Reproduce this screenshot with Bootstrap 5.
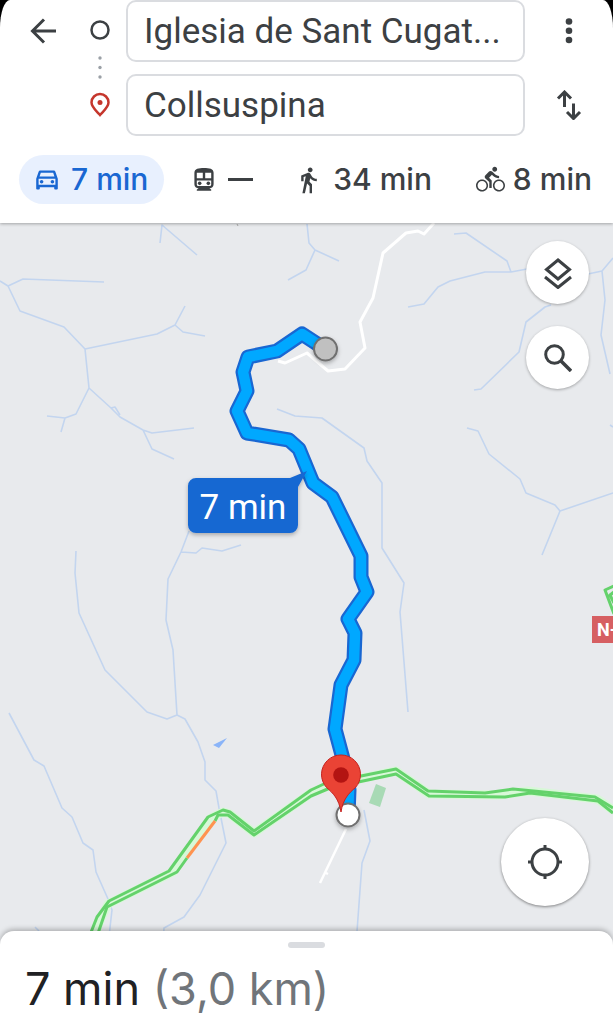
<!DOCTYPE html>
<html lang="es">
<head>
<meta charset="utf-8">
<meta name="viewport" content="width=device-width, initial-scale=1">
<title>Collsuspina</title>
<link href="https://cdn.jsdelivr.net/npm/bootstrap@5.3.0/dist/css/bootstrap.min.css" rel="stylesheet">
<style>
body { background: #e8eaed; color: #3c4043; font-family: Roboto, "Liberation Sans", sans-serif; }
svg { display: block; }
.directions-top { background: #000; box-shadow: 0 1px 3px rgba(0,0,0,.3); }
.directions-panel { background: #fff; border-radius: 10px 10px 0 0 / 28px 28px 0 0; padding-bottom: 19px; }
.route-form { display: grid; grid-template-columns: 86px 28px minmax(0, 1fr) 88px; grid-template-rows: 62px 62px; row-gap: 12px; }
.route-form .stops { grid-row: 1 / span 2; grid-column: 2; }
.route-form .cell-3 { grid-column: 3; margin-left: 12px; }
.route-form .cell-4 { grid-column: 4; }
.place-field { height: 62px; border: 2px solid #dadce0; border-radius: 10px; padding: 0 16px; font-size: 35px; color: #3c4043; text-overflow: ellipsis; background: #fff; }
.icon-btn { border: 0; padding: 0; color: #3c4043; border-radius: 0; }
.modes { padding: 19px 5px 0 19px; gap: 4px; }
.mode-btn { display: flex; align-items: center; gap: 12px; height: 49px; padding: 0 16px; border: 0; border-radius: 25px; font-family: Inter, Roboto, sans-serif; font-size: 30px; font-weight: 500; line-height: 49px; color: #3c4043; white-space: nowrap; }
.mode-btn.active { background: #e8f0fe; color: #1967d2; }
.mode-btn.tight { gap: 8px; }
.mode-btn svg { overflow: visible; flex: none; }
.dash { width: 25px; height: 3px; background: #3c4043; }
.map-area { min-height: 480px; }
.map-controls { padding: 18px 24px 39px; gap: 22px; }
.fab { width: 63px; height: 63px; border: 0; border-radius: 50%; padding: 0; background: #fff; color: #3c4043; box-shadow: 0 1px 3px rgba(0,0,0,.3); display: flex; align-items: center; justify-content: center; }
.fab-large { width: 88px; height: 88px; box-shadow: 0 1px 3px rgba(0,0,0,.45); }
.summary { margin-top: -14px; background: #fff; border-radius: 14px 14px 0 0; box-shadow: 0 -2px 5px rgba(0,0,0,.25); padding: 11px 25px 7px; }
.grabber { width: 37px; height: 6px; border-radius: 3px; background: #dadce0; }
.trip { font-family: Inter, Roboto, sans-serif; font-size: 45px; line-height: 56px; font-weight: 400; color: #202124; margin: 13px 0 0; }
.trip span { color: #70757a; }
</style>
</head>
<body class="d-flex flex-column min-vh-100">
<header class="directions-top position-relative z-1">
  <div class="directions-panel">
    <form class="route-form">
      <button type="button" class="btn icon-btn d-flex align-items-center justify-content-center" aria-label="Atrás">
        <svg width="26" height="26" viewBox="0 0 26 26" fill="none" stroke="currentColor" stroke-width="3"><path d="M26 13H3M14 1.500L2.500 13 14 24.500"/></svg>
      </button>
      <svg class="stops" width="28" height="136" viewBox="0 0 28 136" aria-hidden="true">
        <circle cx="14" cy="30" r="8.500" fill="none" stroke="#3c4043" stroke-width="2.500"/>
        <g fill="#9aa0a6"><circle cx="14" cy="58" r="1.700"/><circle cx="14" cy="67.500" r="1.700"/><circle cx="14" cy="77" r="1.700"/></g>
        <path d="M14 115C10 110.500 5.500 107 5.500 102.500a8.500 8.500 0 0 1 17 0C22.500 107 18 110.500 14 115z" fill="none" stroke="#c5362c" stroke-width="2.500"/>
        <circle cx="14" cy="102.500" r="2.500" fill="#c5362c"/>
      </svg>
      <div class="cell-3"><input class="form-control place-field" type="text" aria-label="Origen" value="Iglesia de Sant Cugat..."></div>
      <button type="button" class="btn icon-btn cell-4 d-flex align-items-center justify-content-center" aria-label="Más opciones">
        <svg width="8" height="26" viewBox="0 0 8 26" fill="currentColor"><circle cx="4" cy="3.500" r="3.300"/><circle cx="4" cy="12.800" r="3.300"/><circle cx="4" cy="22" r="3.300"/></svg>
      </button>
      <div class="cell-3"><input class="form-control place-field" type="text" aria-label="Destino" value="Collsuspina"></div>
      <button type="button" class="btn icon-btn cell-4 d-flex align-items-center justify-content-center" aria-label="Invertir">
        <svg width="26" height="30" viewBox="0 0 26 30" fill="none" stroke="currentColor" stroke-width="3"><path d="M8.500 17V2.500M2 8.500l6.500-6.500 6.500 6.500M17.500 13.500V28M11 22l6.500 6.500L24 22"/></svg>
      </button>
    </form>
    <nav class="modes d-flex justify-content-between" aria-label="Medio de transporte">
      <button type="button" class="btn mode-btn active"><svg width="24" height="24" viewBox="2 2 20 20" fill="currentColor"><path d="M18.920 5.010C18.720 4.420 18.160 4 17.500 4h-11c-.66 0-1.210.42-1.420 1.010L3 11v8c0 .55.45 1 1 1h1c.55 0 1-.45 1-1v-1h12v1c0 .55.45 1 1 1h1c.55 0 1-.45 1-1v-8l-2.080-5.990zM6.850 6h10.290l1.080 3.110H5.770L6.850 6zM19 16H5v-5h14v5z"/><circle cx="7.500" cy="13.500" r="1.500"/><circle cx="16.500" cy="13.500" r="1.500"/></svg>7 min</button>
      <button type="button" class="btn mode-btn" aria-label="Transporte público"><svg width="24" height="24" viewBox="2 2 20 20" fill="currentColor"><path fill-rule="evenodd" d="M12 2c-4.420 0-8 .5-8 4v9.500C4 17.430 5.570 19 7.500 19L6 20v1h12v-1l-1.500-1c1.930 0 3.500-1.570 3.500-3.500V6c0-3.500-3.580-4-8-4zM6 6h5v4.500H6zM13 6h5v4.500h-5zM6 12.500h12v3c0 1-.6 1.600-1.600 1.600H7.600C6.600 17.100 6 16.500 6 15.500z"/><circle cx="8.400" cy="14.800" r="1.500"/><circle cx="15.600" cy="14.800" r="1.500"/></svg><span class="dash"></span></button>
      <button type="button" class="btn mode-btn"><svg width="24" height="24" viewBox="2.500 2 20 20" fill="currentColor"><path d="M13.500 5.500c1.100 0 2-.9 2-2s-.9-2-2-2-2 .9-2 2 .9 2 2 2zM9.800 8.900L7 23h2.100l1.800-8 2.100 2v6h2v-7.500l-2.100-2 .6-3C14.800 12 16.800 13 19 13v-2c-1.900 0-3.500-1-4.300-2.400l-1-1.600c-.4-.6-1-1-1.700-1-.3 0-.5.1-.8.1L6 8.300V13h2V9.600l1.800-.7"/></svg>34 min</button>
      <button type="button" class="btn mode-btn tight"><svg width="29" height="29" viewBox="0 0 24 24" fill="currentColor"><path d="M15.500 5.500c1.100 0 2-.9 2-2s-.9-2-2-2-2 .9-2 2 .9 2 2 2zM5 12c-2.800 0-5 2.200-5 5s2.200 5 5 5 5-2.200 5-5-2.200-5-5-5zm0 8.700c-2 0-3.700-1.700-3.700-3.700s1.700-3.700 3.700-3.700 3.700 1.700 3.700 3.700-1.700 3.700-3.700 3.700zm5.800-10.200l2.400-2.400.8.8c1.300 1.300 3 2.100 5.100 2.100V9c-1.500 0-2.700-.6-3.600-1.500l-1.900-1.900c-.5-.4-1-.6-1.600-.6s-1.100.2-1.400.6L7.800 8.400c-.4.4-.6.9-.6 1.400 0 .6.2 1.100.6 1.400L11 14v5h2v-6.200l-2.200-2.300zM19 12c-2.800 0-5 2.200-5 5s2.200 5 5 5 5-2.200 5-5-2.200-5-5-5zm0 8.700c-2 0-3.700-1.700-3.700-3.700s1.700-3.700 3.700-3.700 3.700 1.700 3.700 3.700-1.700 3.700-3.700 3.700z"/></svg>8 min</button>
    </nav>
  </div>
</header>

<main class="map-area position-relative flex-grow-1 d-flex">
  <svg class="position-absolute top-0 start-0 w-100 h-100" viewBox="0 223 613 722" preserveAspectRatio="xMidYMid slice" fill="none" stroke-linejoin="round" role="img" aria-label="Mapa de la ruta">
    <defs><filter id="soft" x="-20%" y="-20%" width="140%" height="150%"><feDropShadow dx="0" dy="2" stdDeviation="2" flood-opacity=".28"/></filter></defs>
    <!-- streams -->
    <g stroke="#c3d5ef" stroke-width="1.600">
      <path d="M0 281L8 286 23 279 104 282M8 286L20 311 64 327 85 349 89 388 76 414 65 418 47 416M65 418L61 432M85 349L157 334 175 325 185 306M175 325L183 332 205 336M89 388L111 408 120 417 143 430 152 433 194 428M143 430L152 449 174 459M111 408L115 407 120 415"/>
      <path d="M160 243L162 225 197 255M307 224L309 243 315 250 339 261M315 250L306 270 288 280"/>
      <path d="M454 234L466 233 507 261 511 272M408 307L424 304 438 287 450 281 485 272 511 272 527 269M588 274L602 271 613 258M602 271L605 300 601 335 610 374M551 305L545 307 526 322 519 352 481 389 474 390"/>
      <path d="M467 428L478 431 489 454 520 479 526 493 555 505 560 511 613 493M560 511L542 555M610 425L613 427"/>
      <path d="M277 409L295 416 322 418 364 448 367 461 382 483 382 548 404 583 400 612 408 712"/>
      <path d="M76 551L75 573 79 613 105 670 147 712 167 719 177 715 185 719 198 742 205 762 205 780 216 791 219 808 226 843 200 895 184 917 164 928 163 945M189 531L181 552 168 579 166 620 173 650 177 715M181 552L196 553 202 548 222 551 241 545"/>
      <path d="M9 713L34 760 44 766 62 808 72 817 83 843 93 850 96 872 108 899 112 910 108 945M35 927L39 931M364 810L370 841 362 863 356 945"/>
    </g>
    <path d="M227 738L213 745 219 748z" fill="#8ab4f8"/>
    <path d="M237 224l1 2" stroke="#aaa"/>
    <!-- minor roads -->
    <path d="M434 223L424 234 418 231 406 233 383 253 373 298 360 322 365 348 345 369 328 371 307 353 285 363 278 361" stroke="#fff" stroke-width="3"/>
    <path d="M346 829L320 883M324 872l4 2" stroke="#fff" stroke-width="2.500"/>
    <path d="M376 784L386 788 380 807 369 803z" fill="#a8dab5"/>
    <!-- main road with traffic -->
    <path d="M91 945L101 918 108 904 173 872 211 818 223 812 230 814 254 833 311 793 330 785 396 771 429 794 500 795 528 791 597 799 613 810" stroke="#d8f8d8" stroke-width="9"/>
    <g stroke="#64d26b" stroke-width="3">
      <path d="M86 945L97 917 109 901 169 871 208 817 223 810 230 812 254 831 311 790 326 783 396 769 428 791 485 793 513 789 595 797 613 808"/>
      <path d="M94 945L107 907 177 872 187 858M215 821L218 815 228 815 254 835 311 796 330 788 396 774 429 796 505 797 530 793 598 801 613 813"/>
      <path d="M614 586L605 590 614 614M614 592l-4 3 4 8"/>
    </g>
    <path d="M187 858L215 821" stroke="#ff9350" stroke-width="3"/>
    <path d="M592 616h40v27h-40z" fill="#d65f62"/>
    <text x="597" y="636" font-family="Roboto, sans-serif" font-weight="700" font-size="18" fill="#fff">N-</text>
    <!-- route -->
    <path d="M325 349L302 334 277 351 248 357 243 372 247 391 237 411 247 433 289 440 299 449 313 483 332 497 361 556 361 577 367 592 348 619 355 633 354 660 341 685 335 729 346 770 349 790 348 815" stroke="#1967d2" stroke-width="15"/>
    <path d="M325 349L302 334 277 351 248 357 243 372 247 391 237 411 247 433 289 440 299 449 313 483 332 497 361 556 361 577 367 592 348 619 355 633 354 660 341 685 335 729 346 770 349 790 348 815" stroke="#00a8ff" stroke-width="10.500"/>
    <g filter="url(#soft)">
      <circle cx="325.500" cy="349" r="11.500" fill="#c0c0c0" stroke="#707070" stroke-width="2"/>
      <circle cx="348" cy="815" r="11.500" fill="#fff" stroke="#707070" stroke-width="2"/>
      <path d="M196 478H290L307 471 298 487V525a8 8 0 0 1-8 8H196a8 8 0 0 1-8-8V486a8 8 0 0 1 8-8z" fill="#1967d2"/>
    </g>
    <text x="243" y="519" text-anchor="middle" font-family="Roboto, sans-serif" font-size="35" fill="#fff">7 min</text>
    <path d="M341 812C339 799 333 793 326.500 787.500A19.500 19.500 0 1 1 355.500 787.500C349 793 343 799 341 812z" fill="#ea4335" stroke="#c5221f"/>
    <circle cx="341" cy="775" r="7.800" fill="#b31412"/>
  </svg>
  <div class="map-controls position-relative w-100 d-flex flex-column align-items-end">
    <button type="button" class="btn fab" aria-label="Capas"><svg width="30" height="32" viewBox="0 0 30 32" fill="none" stroke="currentColor" stroke-width="3"><path d="M15 3L26.500 12.500 15 22 3.500 12.500zM2 20l13 10.500L28 20"/></svg></button>
    <button type="button" class="btn fab" aria-label="Buscar"><svg width="28" height="28" viewBox="0 0 28 28" fill="none" stroke="currentColor" stroke-width="3"><circle cx="10.500" cy="10.500" r="8.800"/><path d="M17 17l10 10" stroke-width="3.500"/></svg></button>
    <button type="button" class="btn fab fab-large mt-auto" aria-label="Mi ubicación"><svg width="34" height="34" viewBox="0 0 34 34" fill="none" stroke="currentColor" stroke-width="3"><circle cx="17" cy="17" r="13"/><path d="M17 0v5M17 29v5M0 17h5M29 17h5"/></svg></button>
  </div>
</main>

<footer class="summary position-relative">
  <div class="grabber mx-auto"></div>
  <h1 class="trip">7 min <span>(3,0 km)</span></h1>
</footer>
<script src="https://cdn.jsdelivr.net/npm/bootstrap@5.3.0/dist/js/bootstrap.bundle.min.js"></script>
</body>
</html>
